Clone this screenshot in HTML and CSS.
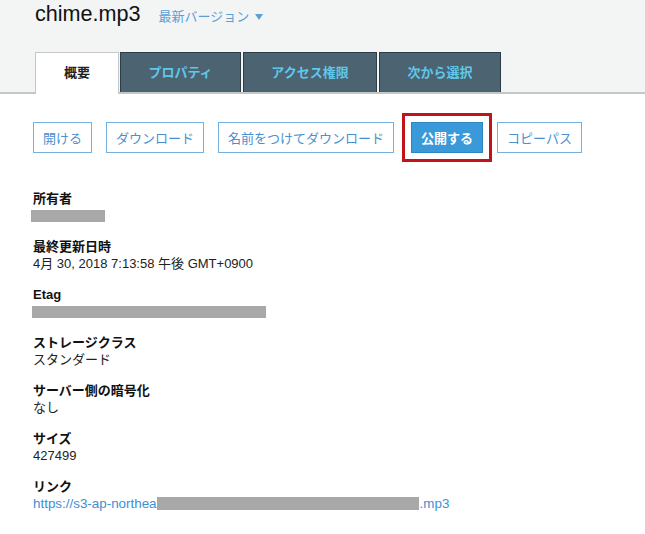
FILE: index.html
```html
<!DOCTYPE html>
<html lang="ja">
<head>
<meta charset="utf-8">
<title>chime.mp3</title>
<link rel="stylesheet" href="styles.css">
</head>
<body>
<header class="header">
  <div class="title-row">
    <h1 class="title">chime.mp3</h1>
    <span class="version">最新バージョン <span class="caret"></span></span>
  </div>
  <nav class="tabs">
    <div class="tab tab-active">概要</div>
    <div class="tab tab-props">プロパティ</div>
    <div class="tab tab-access">アクセス権限</div>
    <div class="tab tab-select">次から選択</div>
  </nav>
</header>
<main class="content">
  <div class="actions">
    <button class="btn">開ける</button>
    <button class="btn">ダウンロード</button>
    <button class="btn">名前をつけてダウンロード</button>
    <span class="highlight-wrap"><button class="btn btn-primary">公開する</button><span class="highlight"></span></span>
    <button class="btn">コピーパス</button>
  </div>
  <dl class="details">
    <div class="item"><dt>所有者</dt><dd><span class="redact redact-owner"></span></dd></div>
    <div class="item"><dt>最終更新日時</dt><dd>4月 30, 2018 7:13:58 午後 GMT+0900</dd></div>
    <div class="item"><dt>Etag</dt><dd><span class="redact redact-etag"></span></dd></div>
    <div class="item"><dt>ストレージクラス</dt><dd>スタンダード</dd></div>
    <div class="item"><dt>サーバー側の暗号化</dt><dd>なし</dd></div>
    <div class="item"><dt>サイズ</dt><dd>427499</dd></div>
    <div class="item"><dt>リンク</dt><dd><a class="link" href="#">https://s3-ap-northea<span class="redact redact-link"></span>.mp3</a></dd></div>
  </dl>
</main>
</body>
</html>
```

FILE: styles.css
```css
* { box-sizing: border-box; }
html, body {
  margin: 0;
  padding: 0;
  background: #ffffff;
  font-family: "Liberation Sans", "Noto Sans CJK JP", sans-serif;
  color: #222;
}
.header {
  background: #f3f4f4;
  border-bottom: 2px solid #c4c6c8;
  padding-left: 35px;
}
.title-row {
  display: flex;
  align-items: baseline;
  height: 52px;
}
.title {
  margin: 0;
  font-size: 21.6px;
  font-weight: normal;
  line-height: 28px;
  color: #111;
}
.version {
  margin-left: 18px;
  font-size: 13px;
  color: #5a9fd6;
  display: inline-flex;
  align-items: center;
}
.caret {
  display: inline-block;
  margin-left: 6px;
  width: 0;
  height: 0;
  border-left: 4.5px solid transparent;
  border-right: 4.5px solid transparent;
  border-top: 6px solid #5a9fd6;
  position: relative;
  top: 1px;
}
.tabs {
  display: flex;
  align-items: flex-end;
  height: 40px;
}
.tab {
  height: 40px;
  display: flex;
  align-items: center;
  justify-content: center;
  padding-bottom: 2px;
  font-size: 13px;
  font-weight: bold;
  background: #4c6371;
  border: 1px solid #2c3d47;
  border-bottom: none;
  color: #5fc7ea;
}
.tab + .tab { margin-left: 2px; }
.tab-active {
  width: 84px;
  height: 42px;
  margin-bottom: -2px;
  padding-bottom: 4px;
  background: #ffffff;
  border: 1px solid #c4c6c8;
  border-bottom: none;
  color: #222;
}
.tab-active + .tab { margin-left: 1px; }
.tab-props { width: 121px; }
.tab-access { width: 134px; }
.tab-select { width: 122px; }

.content {
  padding: 28px 0 0 33px;
}
.actions {
  display: flex;
  align-items: center;
  height: 31px;
}
.btn {
  height: 31px;
  padding: 0 9px;
  margin: 0 14px 0 0;
  font-family: "Liberation Sans", "Noto Sans CJK JP", sans-serif;
  font-size: 13px;
  color: #4a8fce;
  background: #ffffff;
  border: 1px solid #76b0df;
  border-radius: 0;
}
.actions .btn:nth-child(3) { margin-right: 17px; }
.highlight-wrap {
  position: relative;
  display: inline-flex;
  margin-right: 14px;
}
.highlight-wrap .btn { margin: 0; }
.btn-primary {
  width: 72px;
  padding: 0;
  background: #3a99d9;
  border-color: #2f86c4;
  color: #ffffff;
  font-weight: bold;
}
.highlight {
  position: absolute;
  left: -9px;
  top: -9px;
  right: -9px;
  bottom: -9px;
  border: 3px solid #c0141a;
  pointer-events: none;
}

.details {
  margin: 37px 0 0 0;
  padding: 0;
}
.item {
  margin-bottom: 14px;
}
.item dt {
  font-size: 13px;
  font-weight: bold;
  line-height: 17px;
  color: #111;
}
.item dd {
  margin: 0;
  font-size: 13px;
  line-height: 17px;
  color: #222;
  display: flex;
  align-items: center;
  height: 17px;
}
.redact {
  display: inline-block;
  background: #a8a8a8;
  height: 12px;
}
.redact-owner { width: 74px; margin-left: -2px; }
.redact-etag { width: 234px; margin-left: -1px; }
.redact-link { width: 262px; height: 13px; margin-right: 1px; }
.link {
  color: #3d8fd5;
  font-size: 13.4px;
  text-decoration: none;
  display: inline-flex;
  align-items: center;
}
```
